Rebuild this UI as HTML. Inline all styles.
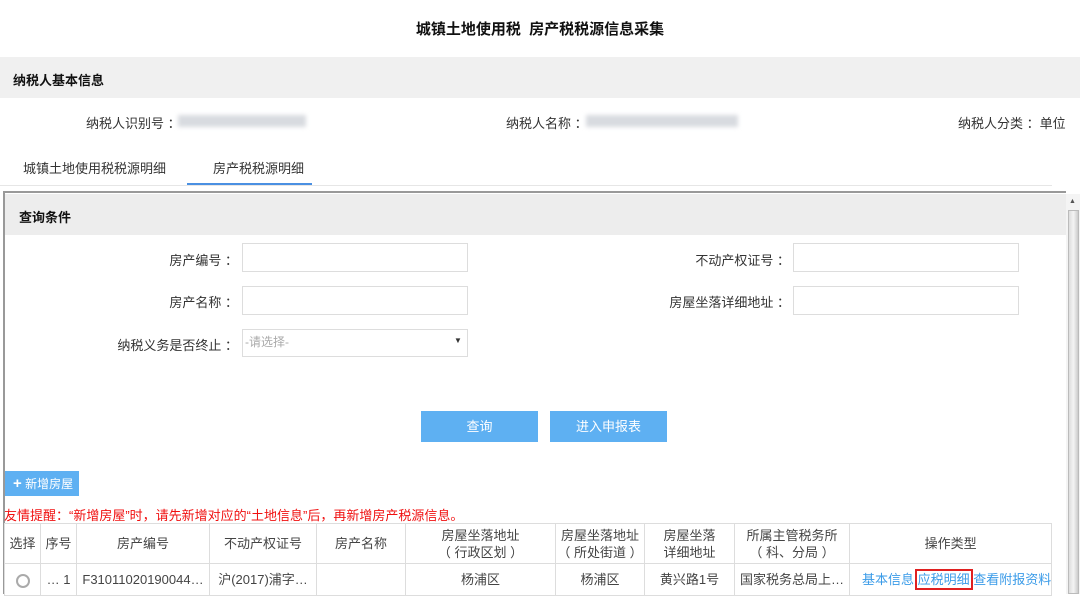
<!DOCTYPE html>
<html><head><meta charset="utf-8"><style>
*{margin:0;padding:0;box-sizing:border-box}
body{width:1080px;height:594px;overflow:hidden;background:#fff;font-family:"Liberation Sans","Noto Sans CJK SC",sans-serif;font-size:13px;color:#333;position:relative}
.a{position:absolute;white-space:nowrap}
.b{font-weight:bold}
.inp{position:absolute;border:1px solid #ddd;background:#fff;height:29px;width:226px}
.lbl{position:absolute;text-align:right;white-space:nowrap}
.btn{position:absolute;background:#5eb0f2;color:#fff;text-align:center;line-height:31px;height:31px;width:117px}
table{position:absolute;left:4px;top:523px;border-collapse:collapse;font-size:13px}
td{border:1px solid #ddd;text-align:center;color:#444;line-height:17px;padding:0}
tr.h td{height:40px}
tr.r td{height:32px}
</style></head><body>
<div class="a b" style="left:0;width:1080px;text-align:center;top:18px;font-size:15px;color:#111">城镇土地使用税&nbsp; 房产税税源信息采集</div>
<div class="a" style="left:0;top:57px;width:1080px;height:41px;background:#f0f0f0"></div>
<div class="a b" style="left:13px;top:70px;color:#111">纳税人基本信息</div>
<div class="a" style="left:86px;top:113px">纳税人识别号 ：</div>
<div class="a" style="left:178px;top:115px;width:128px;height:12px;background:#d8dbe0;filter:blur(2px)"></div>
<div class="a" style="left:506px;top:113px">纳税人名称 ：</div>
<div class="a" style="left:586px;top:115px;width:152px;height:12px;background:#d8dbe0;filter:blur(2px)"></div>
<div class="a" style="left:958px;top:113px">纳税人分类 ：单位</div>
<div class="a" style="left:23px;top:158px">城镇土地使用税税源明细</div>
<div class="a" style="left:213px;top:158px">房产税税源明细</div>
<div class="a" style="left:0;top:185px;width:1052px;height:1px;background:#e6e6e6"></div>
<div class="a" style="left:187px;top:183px;width:125px;height:2px;background:#4a90e2"></div>
<div class="a" style="left:3px;top:191px;width:1063px;height:403px;border-left:2px solid #999;border-top:2px solid #999"></div>
<div class="a" style="left:1066px;top:194px;width:14px;height:400px;background:#f4f4f4"></div>
<div class="a" style="left:1068px;top:210px;width:11px;height:384px;background:linear-gradient(90deg,#ddd,#f4f4f4,#ccc);border:1px solid #bbb"></div>
<div class="a" style="left:1069px;top:198px;font-size:7px;color:#555">▲</div>
<div class="a" style="left:5px;top:194px;width:1061px;height:41px;background:#ededed"></div>
<div class="a b" style="left:19px;top:207px;color:#111">查询条件</div>
<div class="lbl" style="right:842px;top:250px">房产编号 ：</div>
<div class="inp" style="left:242px;top:243px"></div>
<div class="lbl" style="right:290px;top:250px">不动产权证号 ：</div>
<div class="inp" style="left:793px;top:243px"></div>
<div class="lbl" style="right:842px;top:292px">房产名称 ：</div>
<div class="inp" style="left:242px;top:286px"></div>
<div class="lbl" style="right:290px;top:292px">房屋坐落详细地址 ：</div>
<div class="inp" style="left:793px;top:286px"></div>
<div class="lbl" style="right:842px;top:335px">纳税义务是否终止 ：</div>
<div class="inp" style="left:242px;top:329px;height:28px"></div>
<div class="a" style="left:245px;top:333px;color:#aaa;font-size:12px">-请选择-</div>
<div class="a" style="left:454px;top:336px;font-size:8px">▼</div>
<div class="btn" style="left:421px;top:411px">查询</div>
<div class="btn" style="left:550px;top:411px">进入申报表</div>
<div class="a" style="left:5px;top:471px;width:74px;height:25px;background:#5eb0f2;color:#fff;font-size:12px;line-height:25px;padding-left:8px"><b style="font-size:15px">+</b> 新增房屋</div>
<div class="a" style="left:4px;top:505px;color:#f01010;font-size:13px">友情提醒：“新增房屋”时，请先新增对应的“土地信息”后，再新增房产税源信息。</div>
<table>
<tr class="h"><td style="width:36px">选择</td><td style="width:36px">序号</td><td style="width:133px">房产编号</td><td style="width:107px">不动产权证号</td><td style="width:89px">房产名称</td><td style="width:150px">房屋坐落地址<br>（ 行政区划 ）</td><td style="width:89px">房屋坐落地址<br>（ 所处街道 ）</td><td style="width:90px">房屋坐落<br>详细地址</td><td style="width:115px">所属主管税务所<br>（ 科、分局 ）</td><td style="width:200px">操作类型</td></tr>
<tr class="r"><td><span style="display:inline-block;width:14px;height:14px;border-radius:50%;border:2px solid #aaa;vertical-align:middle"></span></td><td>… 1</td><td>F31011020190044…</td><td>沪(2017)浦字…</td><td></td><td>杨浦区</td><td>杨浦区</td><td>黄兴路1号</td><td>国家税务总局上…</td><td style="color:#3a9be8;white-space:nowrap;padding-left:12px">基本信息 <span style="outline:2px solid #e02020;outline-offset:1px">应税明细</span> 查看附报资料</td></tr>
</table>
</body></html>
